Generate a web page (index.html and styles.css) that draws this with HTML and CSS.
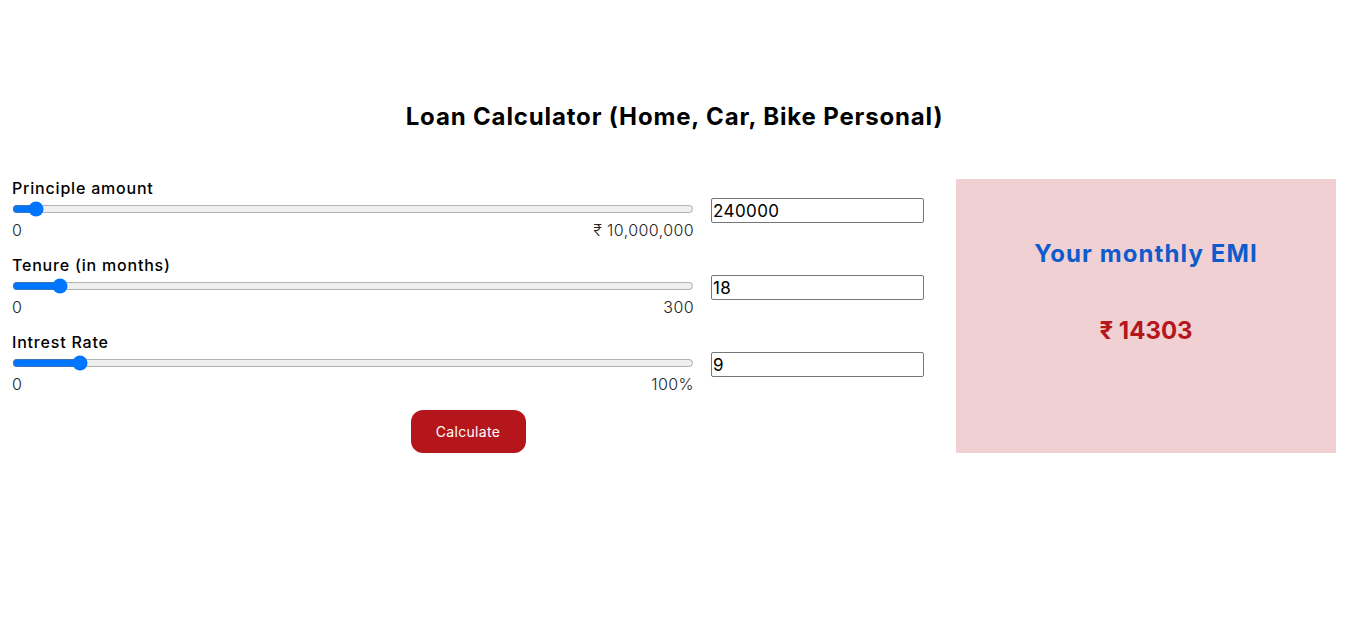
FILE: index.html
```html
<!DOCTYPE html>
<html lang="en">
<head>
<meta charset="utf-8">
<title>Loan Calculator</title>
<link rel="stylesheet" href="styles.css">
</head>
<body>
<h1 class="title">Loan Calculator (Home, Car, Bike Personal)</h1>
<div class="main">
  <div class="calc">
    <div class="field">
      <label class="label" for="p">Principle amount</label>
      <input class="range" type="range" min="0" max="10000000" value="240000">
      <input class="num" id="p" type="text" value="240000">
      <div class="minmax"><span>0</span><span>₹ 10,000,000</span></div>
    </div>
    <div class="field">
      <label class="label" for="t">Tenure (in months)</label>
      <input class="range" type="range" min="0" max="300" value="18">
      <input class="num" id="t" type="text" value="18">
      <div class="minmax"><span>0</span><span>300</span></div>
    </div>
    <div class="field field-last">
      <label class="label" for="r">Intrest Rate</label>
      <input class="range" type="range" min="0" max="100" value="9">
      <input class="num" id="r" type="text" value="9">
      <div class="minmax"><span>0</span><span>100%</span></div>
    </div>
    <div class="actions"><button class="btn" type="button">Calculate</button></div>
  </div>
  <div class="result">
    <h2 class="result-title">Your monthly EMI</h2>
    <div class="result-value">₹ 14303</div>
  </div>
</div>
</body>
</html>
```
FILE: styles.css
```css
* { box-sizing: border-box; }
body {
  margin: 0;
  font-family: Inter, "Noto Sans", sans-serif;
  color: #000;
  background: #fff;
}
.title {
  margin: 102px 0 46px;
  text-align: center;
  font-size: 24px;
  line-height: 30px;
  font-weight: 700;
  letter-spacing: 0.85px;
}
.main {
  display: flex;
  gap: 32px;
  padding: 0 13px 0 12px;
}
.calc {
  flex: 1;
  display: flex;
  flex-direction: column;
}
.field {
  display: grid;
  grid-template-columns: 1fr 213px;
  column-gap: 17px;
  margin-bottom: 18px;
}
.field-last { margin-bottom: 0; }
.label {
  grid-column: 1 / 3;
  font-size: 16px;
  line-height: 20px;
  font-weight: 500;
  letter-spacing: 0.8px;
}
.range {
  margin: 0 0 3px;
  width: 100%;
  align-self: center;
}
.num {
  height: 25px;
  margin: 0;
  padding: 0 1px;
  font-family: inherit;
  font-size: 17px;
  letter-spacing: 0.4px;
  border: 1px solid #767676;
  border-radius: 2px;
  color: #000;
}
.minmax {
  display: flex;
  justify-content: space-between;
  font-size: 16px;
  line-height: 14px;
  font-weight: 300;
  letter-spacing: 0.4px;
  color: #222;
}
.actions {
  display: flex;
  justify-content: center;
  margin-top: 19px;
}
.btn {
  width: 115px;
  height: 43px;
  border: none;
  border-radius: 12px;
  background: #b5161c;
  color: #fff;
  font-family: inherit;
  font-size: 14px;
  letter-spacing: 0.3px;
}
.result {
  width: 380px;
  margin-top: 1px;
  background: #f0d0d3;
  text-align: center;
  padding-top: 60px;
}
.result-title {
  margin: 0;
  font-size: 24px;
  line-height: 30px;
  font-weight: 700;
  letter-spacing: 1.1px;
  color: #0e5ccc;
}
.result-value {
  margin-top: 47px;
  font-size: 24px;
  line-height: 30px;
  font-weight: 700;
  color: #b5161c;
}
```
